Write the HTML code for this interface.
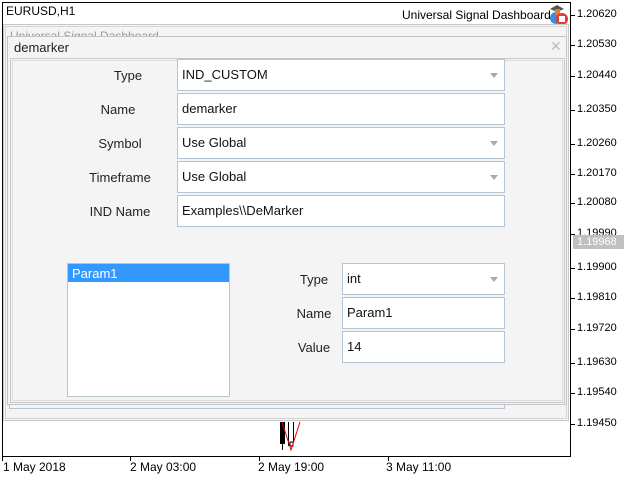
<!DOCTYPE html>
<html><head><style>
*{margin:0;padding:0;box-sizing:border-box}
body{width:640px;height:480px;background:#fff;position:relative;overflow:hidden;font-family:"Liberation Sans",sans-serif;font-size:12px;color:#000}
.a{position:absolute}
.lbl{position:absolute;font-size:13px;color:#222;text-align:center}
.fld{position:absolute;background:#fff;border:1px solid #b4c4d4;font-size:13px;padding-left:4px;line-height:30px;color:#111}
.arr{position:absolute;right:6px;top:13px;width:0;height:0;border-left:4px solid transparent;border-right:4px solid transparent;border-top:5px solid #aaa}
.pr{position:absolute;left:577px;font-size:11px}
.tk{position:absolute;left:571px;width:4px;height:1px;background:#000}
</style></head><body>
<div class="a" style="left:2px;top:2px;width:569px;height:455px;border:1px solid #000"></div>
<div class="a" style="left:6px;top:4px;font-size:12px">EURUSD,H1</div>
<div class="a" style="left:402px;top:8px;font-size:12px">Universal Signal Dashboard</div>
<svg class="a" style="left:547px;top:3px" width="24" height="22"><circle cx="9" cy="15" r="6" fill="#3b8fd8"/><polygon points="3,6 10,2 17,6 10,9" fill="#555"/><rect x="8" y="6" width="5" height="6" fill="#e87a2a"/><circle cx="15" cy="16" r="6" fill="#e23b2a"/><rect x="12" y="13" width="6" height="6" fill="#fff"/></svg>
<div class="pr" style="top:8px">1.20620</div><div class="tk" style="top:15px"></div>
<div class="pr" style="top:38px">1.20530</div><div class="tk" style="top:45px"></div>
<div class="pr" style="top:69px">1.20440</div><div class="tk" style="top:76px"></div>
<div class="pr" style="top:103px">1.20350</div><div class="tk" style="top:110px"></div>
<div class="pr" style="top:137px">1.20260</div><div class="tk" style="top:144px"></div>
<div class="pr" style="top:167px">1.20170</div><div class="tk" style="top:174px"></div>
<div class="pr" style="top:196px">1.20080</div><div class="tk" style="top:203px"></div>
<div class="pr" style="top:227px">1.19990</div><div class="tk" style="top:234px"></div>
<div class="a" style="left:573px;top:235px;width:51px;height:14px;background:#c0c0c0;color:#fff;font-size:11px;padding-left:4px;line-height:14px">1.19968</div>
<div class="pr" style="top:261px">1.19900</div><div class="tk" style="top:268px"></div>
<div class="pr" style="top:291px">1.19810</div><div class="tk" style="top:298px"></div>
<div class="pr" style="top:322px">1.19720</div><div class="tk" style="top:329px"></div>
<div class="pr" style="top:356px">1.19630</div><div class="tk" style="top:363px"></div>
<div class="pr" style="top:386px">1.19540</div><div class="tk" style="top:393px"></div>
<div class="pr" style="top:417px">1.19450</div><div class="tk" style="top:424px"></div>
<div class="a" style="left:3px;top:460px">1 May 2018</div><div class="a" style="left:2px;top:456px;width:1px;height:5px;background:#000"></div>
<div class="a" style="left:130px;top:460px">2 May 03:00</div><div class="a" style="left:130px;top:456px;width:1px;height:5px;background:#000"></div>
<div class="a" style="left:258px;top:460px">2 May 19:00</div><div class="a" style="left:259px;top:456px;width:1px;height:5px;background:#000"></div>
<div class="a" style="left:386px;top:460px">3 May 11:00</div><div class="a" style="left:388px;top:456px;width:1px;height:5px;background:#000"></div>
<svg class="a" style="left:270px;top:415px" width="40" height="40"><rect x="10" y="7" width="5" height="22" fill="#000"/><line x1="12.5" y1="29" x2="12.5" y2="35" stroke="#000"/><line x1="18.5" y1="7" x2="18.5" y2="31" stroke="#000"/><line x1="23.5" y1="7" x2="23.5" y2="27" stroke="#000"/><rect x="20" y="27" width="3" height="4" fill="none" stroke="#000"/><polyline points="12,7 21,35 30,7" fill="none" stroke="#e00" stroke-width="1"/></svg>
<div class="a" style="left:3px;top:24px;width:566px;height:397px;background:#f4f4f4;border:1px solid #c8c8c8"></div>
<div class="a" style="left:5px;top:26px;width:562px;height:393px;border:1px solid #d4d4d4"></div>
<div class="a" style="left:10px;top:31px;height:5px;overflow:hidden"><div style="font-size:12px;color:#999;margin-top:-2px">Universal Signal Dashboard</div></div>
<div class="a" style="left:9px;top:405px;width:496px;height:4px;border:1px solid #b4c4d4;border-top:none"></div>
<div class="a" style="left:7px;top:36px;width:560px;height:369px;background:#f4f4f4;border:1px solid #c4c4c4"></div>
<div class="a" style="left:14px;top:40px;font-size:13px;color:#222">demarker</div>
<div class="a" style="left:550px;top:38px;font-size:14px;color:#bbb">✕</div>
<div class="a" style="left:10px;top:58px;width:555px;height:345px;border:1px solid #c8c8c8"></div>
<div class="a" style="left:12px;top:60px;width:551px;height:341px;border:1px solid #dcdcdc"></div>
<div class="lbl" style="left:78px;width:100px;top:68px">Type</div>
<div class="fld" style="left:177px;top:59px;width:328px;height:32px">IND_CUSTOM<div class="arr"></div></div>
<div class="lbl" style="left:68px;width:100px;top:102px">Name</div>
<div class="fld" style="left:177px;top:93px;width:328px;height:32px">demarker</div>
<div class="lbl" style="left:70px;width:100px;top:136px">Symbol</div>
<div class="fld" style="left:177px;top:127px;width:328px;height:32px">Use Global<div class="arr"></div></div>
<div class="lbl" style="left:70px;width:100px;top:170px">Timeframe</div>
<div class="fld" style="left:177px;top:161px;width:328px;height:32px">Use Global<div class="arr"></div></div>
<div class="lbl" style="left:70px;width:100px;top:204px">IND Name</div>
<div class="fld" style="left:177px;top:195px;width:328px;height:32px">Examples\\DeMarker</div>
<div class="a" style="left:67px;top:263px;width:163px;height:134px;background:#fff;border:1px solid #b8c4cc"></div>
<div class="a" style="left:68px;top:264px;width:161px;height:18px;background:#3399ff;color:#fff;font-size:13px;padding-left:4px;line-height:19px">Param1</div>
<div class="lbl" style="left:264px;width:100px;top:272px">Type</div>
<div class="fld" style="left:342px;top:263px;width:163px;height:32px">int<div class="arr"></div></div>
<div class="lbl" style="left:264px;width:100px;top:306px">Name</div>
<div class="fld" style="left:342px;top:297px;width:163px;height:32px">Param1</div>
<div class="lbl" style="left:264px;width:100px;top:340px">Value</div>
<div class="fld" style="left:342px;top:331px;width:163px;height:32px">14</div>
</body></html>
